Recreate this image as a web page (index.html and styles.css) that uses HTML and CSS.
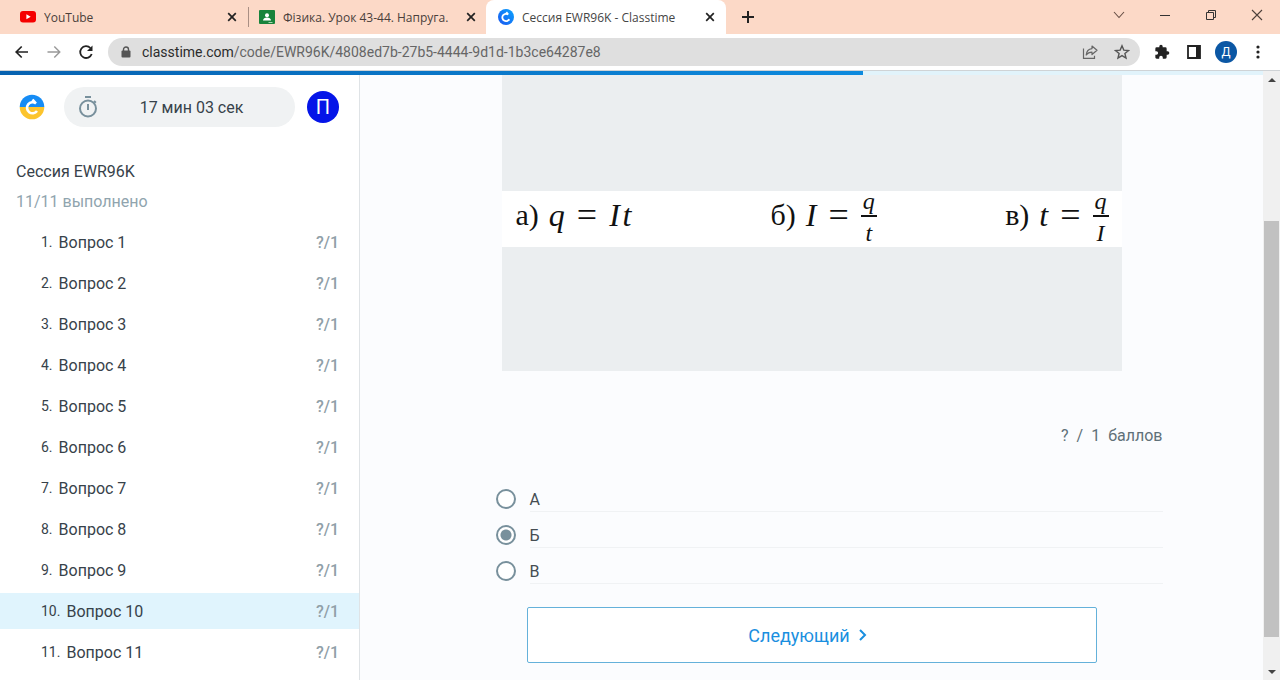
FILE: index.html
```html
<!DOCTYPE html>
<html lang="ru">
<head>
<meta charset="utf-8">
<title>Сессия EWR96K - Classtime</title>
<link rel="stylesheet" href="styles.css">
</head>
<body>
<header class="browser">
  <div class="tabstrip">
    <div class="tab tab-first">
      <svg class="favicon" viewBox="0 0 16 16"><rect y="2" width="16" height="11.5" rx="3" fill="#f50000"/><path d="M6.4 5.2v5l4.3-2.5z" fill="#fff"/></svg>
      <span class="tab-title">YouTube</span>
      <button class="icon-btn tab-close" aria-label="Закрыть вкладку"><svg viewBox="0 0 10 10"><path d="M1.2 1.2l7.6 7.6M8.8 1.2L1.2 8.8" stroke="#222" stroke-width="1.7"/></svg></button>
    </div>
    <div class="tab tab-second">
      <svg class="favicon" viewBox="0 0 16 16"><rect y="1" width="16" height="14" rx="1" fill="#18833b"/><circle cx="8" cy="6.2" r="2" fill="#fff"/><path d="M4 11.5c0-4 8-4 8 0z" fill="#fff"/><path d="M9.500 13h4v1h-4z" fill="#a5d6b2"/></svg>
      <span class="tab-title">Фізика. Урок 43-44. Напруга.</span>
      <button class="icon-btn tab-close" aria-label="Закрыть вкладку"><svg viewBox="0 0 10 10"><path d="M1.2 1.2l7.6 7.600M8.800 1.200L1.200 8.800" stroke="#222" stroke-width="1.7"/></svg></button>
    </div>
    <div class="tab tab-active">
      <svg class="favicon" viewBox="0 0 16 16"><defs><linearGradient id="blue" x1="0" y1="1" x2="1" y2="0"><stop offset="0" stop-color="#1b55ee"/><stop offset="1" stop-color="#0aa5ff"/></linearGradient></defs><circle cx="8" cy="8" r="8" fill="url(#blue)"/><path d="M11.300 10.200A3.700 3.700 0 1 1 10.300 5.500M8.300 3.200l2 2.300" fill="none" stroke="#fff" stroke-width="1.800"/></svg>
      <span class="tab-title">Сессия EWR96K - Classtime</span>
      <button class="icon-btn tab-close" aria-label="Закрыть вкладку"><svg viewBox="0 0 10 10"><path d="M1.200 1.200l7.600 7.600M8.800 1.200L1.200 8.800" stroke="#222" stroke-width="1.700"/></svg></button>
    </div>
    <button class="icon-btn new-tab" aria-label="Новая вкладка"><svg viewBox="0 0 12 12"><path d="M6 0v12M0 6h12" stroke="#222" stroke-width="2"/></svg></button>
    <div class="window-controls">
      <button class="icon-btn win" aria-label="Поиск вкладок"><svg viewBox="0 0 12 12"><path d="M1 3l5 5.500L11 3" fill="none" stroke="#664f45" stroke-width="1.100"/></svg></button>
      <button class="icon-btn win" aria-label="Свернуть"><svg viewBox="0 0 12 12"><path d="M1 6.500h10" stroke="#333" stroke-width="1"/></svg></button>
      <button class="icon-btn win" aria-label="Развернуть"><svg viewBox="0 0 12 12"><path d="M1.500 3.500h7v7h-7zM3.500 3.500v-2h7v7h-2" fill="none" stroke="#333"/></svg></button>
      <button class="icon-btn win" aria-label="Закрыть"><svg viewBox="0 0 12 12"><path d="M1 1l10 10M11 1L1 11" stroke="#4d403b" stroke-width="1.100"/></svg></button>
    </div>
  </div>
  <div class="toolbar">
    <button class="icon-btn nav" aria-label="Назад"><svg viewBox="0 0 16 16"><path d="M14 8H2.500M7.700 2.500L2.200 8l5.500 5.500" fill="none" stroke="#222" stroke-width="1.700"/></svg></button>
    <button class="icon-btn nav" aria-label="Вперёд"><svg viewBox="0 0 16 16"><path d="M1.500 8h12M8.300 2.500l5.500 5.500-5.500 5.500" fill="none" stroke="#999" stroke-width="1.400"/></svg></button>
    <button class="icon-btn nav" aria-label="Обновить"><svg viewBox="0 0 16 16"><path d="M13.700 10A5.900 5.900 0 1 1 12.400 4" fill="none" stroke="#222" stroke-width="1.800"/><path d="M14.500 1.500v5.500H9z" fill="#222"/></svg></button>
    <div class="omnibox">
      <svg class="lock" viewBox="0 0 10 12"><path d="M2.500 5V3.500a2.500 2.500 0 0 1 5 0V5" fill="none" stroke="#555" stroke-width="1.400"/><rect x=".5" y="4.500" width="9" height="7" rx="1" fill="#555"/></svg>
      <span class="url"><span class="host">classtime.com</span>/code/EWR96K/4808ed7b-27b5-4444-9d1d-1b3ce64287e8</span>
      <button class="icon-btn nav" aria-label="Поделиться"><svg viewBox="0 0 16 16"><path d="M1.500 4.500v9.800h11v-2.500" fill="none" stroke="#666" stroke-width="1.200"/><path d="M10 2l5 4.300-5 4.200V8.200C7 8.200 5.500 9.200 4.200 11c.3-3.500 2.500-6 5.800-6.400z" fill="none" stroke="#666" stroke-width="1.200" stroke-linejoin="round"/></svg></button>
      <button class="icon-btn nav" aria-label="В закладки"><svg viewBox="0 0 16 16"><path d="M8 1.800l1.800 4.300 4.700.4-3.600 3 1.100 4.600L8 11.600l-4 2.500 1.100-4.600-3.600-3 4.700-.4z" fill="none" stroke="#555" stroke-width="1.400"/></svg></button>
    </div>
    <button class="icon-btn nav" aria-label="Расширения"><svg viewBox="0 0 24 24"><path fill="#222" d="M20.500 11H19V7a2 2 0 0 0-2-2h-4V3.500a2.500 2.500 0 0 0-5 0V5H4a2 2 0 0 0-2 2v3.800h1.500a2.700 2.700 0 0 1 0 5.400H2V20c0 1.100.9 2 2 2h3.800v-1.500a2.700 2.700 0 0 1 5.400 0V22H17a2 2 0 0 0 2-2v-4h1.500a2.500 2.500 0 0 0 0-5z"/></svg></button>
    <button class="icon-btn nav" aria-label="Боковая панель"><svg viewBox="0 0 16 16"><path d="M2 2h12v12H2z" fill="none" stroke="#222" stroke-width="1.800"/><path d="M10 2h4v12h-4z" fill="#222"/></svg></button>
    <button class="profile">Д</button>
    <button class="icon-btn nav" aria-label="Меню"><svg viewBox="0 0 16 16"><g fill="#222"><circle cx="8" cy="3" r="1.600"/><circle cx="8" cy="8" r="1.600"/><circle cx="8" cy="13" r="1.600"/></g></svg></button>
  </div>
</header>
<div class="viewport">
  <div class="app">
    <div class="progress"><div class="progress-done" style="width:68.300%"></div></div>
    <div class="columns">
      <aside class="sidebar">
        <div class="topline">
          <svg class="logo" viewBox="0 0 26 26"><defs><clipPath id="disc"><circle cx="13" cy="13" r="12.300"/></clipPath></defs><g clip-path="url(#disc)"><path d="M0 0h26v13H0z" fill="#168cf5"/><path d="M0 13h26v13H0z" fill="#fcc42d"/></g><path d="M18 17A5.500 5.500 0 1 1 17 9.500M13.500 5.500L17 9.500" fill="none" stroke="#fff" stroke-width="2.600"/></svg>
          <div class="timer">
            <svg class="stopwatch" viewBox="0 0 20 22"><circle cx="10" cy="12.500" r="8" fill="none" stroke="#78909c" stroke-width="2"/><path d="M7 1h6M10 8v6M16 5l1.800 1.800" stroke="#78909c" stroke-width="2"/></svg>
            <span class="time">17 мин 03 сек</span>
          </div>
          <button class="avatar">П</button>
        </div>
        <h1 class="session">Сессия EWR96K</h1>
        <p class="done">11/11 выполнено</p>
        <nav class="questions">
          <a class="question" href="#q1"><span class="num">1.</span><span class="name">Вопрос 1</span><span class="mark">?/1</span></a>
          <a class="question" href="#q2"><span class="num">2.</span><span class="name">Вопрос 2</span><span class="mark">?/1</span></a>
          <a class="question" href="#q3"><span class="num">3.</span><span class="name">Вопрос 3</span><span class="mark">?/1</span></a>
          <a class="question" href="#q4"><span class="num">4.</span><span class="name">Вопрос 4</span><span class="mark">?/1</span></a>
          <a class="question" href="#q5"><span class="num">5.</span><span class="name">Вопрос 5</span><span class="mark">?/1</span></a>
          <a class="question" href="#q6"><span class="num">6.</span><span class="name">Вопрос 6</span><span class="mark">?/1</span></a>
          <a class="question" href="#q7"><span class="num">7.</span><span class="name">Вопрос 7</span><span class="mark">?/1</span></a>
          <a class="question" href="#q8"><span class="num">8.</span><span class="name">Вопрос 8</span><span class="mark">?/1</span></a>
          <a class="question" href="#q9"><span class="num">9.</span><span class="name">Вопрос 9</span><span class="mark">?/1</span></a>
          <a class="question current" href="#q10"><span class="num">10.</span><span class="name">Вопрос 10</span><span class="mark">?/1</span></a>
          <a class="question" href="#q11"><span class="num">11.</span><span class="name">Вопрос 11</span><span class="mark">?/1</span></a>
        </nav>
      </aside>
      <main class="content">
        <div class="sheet">
          <figure class="figure">
            <div class="formulas">
              <div class="formula"><span>а)</span><i>q</i><span class="eq">=</span><i>I&#8202;t</i></div>
              <div class="formula"><span>б)</span><i>I</i><span class="eq">=</span><i class="fraction"><span class="top">q</span><span class="bottom">t</span></i></div>
              <div class="formula"><span>в)</span><i>t</i><span class="eq">=</span><i class="fraction"><span class="top">q</span><span class="bottom">I</span></i></div>
            </div>
          </figure>
          <p class="score"><span>?</span><span>/</span><span>1</span><span>баллов</span></p>
          <div class="options" role="radiogroup" aria-label="Ответ">
            <label class="option"><input class="radio" type="radio" name="answer"><span class="letter">А</span></label>
            <label class="option"><input class="radio" type="radio" name="answer" checked><span class="letter">Б</span></label>
            <label class="option"><input class="radio" type="radio" name="answer"><span class="letter">В</span></label>
          </div>
          <button class="next">Следующий<svg class="chevron" viewBox="0 0 8 12"><path d="M1 1l5 5-5 5" fill="none" stroke="#1a8fe0" stroke-width="2"/></svg></button>
        </div>
      </main>
    </div>
  </div>
  <div class="scrollbar">
    <svg class="arrow" viewBox="0 0 8 4"><path d="M0 4l4-4 4 4z" fill="#444"/></svg>
    <div class="track"><div class="thumb"></div></div>
    <svg class="arrow" viewBox="0 0 8 4"><path d="M0 0l4 4 4-4z" fill="#444"/></svg>
  </div>
</div>
</body>
</html>
```

FILE: styles.css
```css
* { box-sizing: border-box; }
body { margin: 0; height: 100vh; display: flex; flex-direction: column; overflow: hidden; font-family: Roboto, "Liberation Sans", sans-serif; font-size: 16px; color: #37424a; background: #fff; }
button { border: 0; padding: 0; background: none; font: inherit; color: inherit; }
h1, p, figure { margin: 0; }
svg { display: block; flex: none; }

.browser { flex: none; border-bottom: 1px solid #cfd3d6; }
.tabstrip { display: flex; height: 34px; background: #fcd9c7; font-family: "Open Sans", "Noto Sans", sans-serif; font-size: 12px; color: #4a3f3b; }
.tab { display: flex; align-items: center; gap: 8px; }
.tab-first { width: 248px; padding: 0 10px 0 20px; }
.tab-second { width: 238px; padding: 0 9px 0 11px; background: linear-gradient(#a98f84, #a98f84) left center / 1px 20px no-repeat; }
.tab-active { width: 240px; padding: 0 10px 0 12px; background: #fff; border-radius: 8px 8px 0 0; color: #454545; }
.tab-title { flex: 1; white-space: nowrap; overflow: hidden; }
.favicon { width: 16px; height: 16px; }
.icon-btn { display: flex; align-items: center; justify-content: center; flex: none; }
.tab-close { width: 12px; height: 16px; }
.tab-close svg { width: 10px; height: 10px; }
.new-tab { width: 44px; }
.new-tab svg { width: 12px; height: 12px; }
.window-controls { display: flex; margin-left: auto; height: 29px; }
.win { width: 46px; }
.win svg { width: 12px; height: 12px; }

.toolbar { display: flex; align-items: center; height: 36px; padding: 0 14px; }
.toolbar > .nav { margin-right: 16px; }
.toolbar > .nav:last-child { margin-right: 0; }
.nav svg { width: 16px; height: 16px; }
.omnibox { flex: 1; display: flex; align-items: center; gap: 16px; height: 28px; margin: 0 14px 0 -2px; padding: 0 10px 0 13px; background: #dfdfdf; border-radius: 14px; font-size: 14px; color: #666; min-width: 0; }
.omnibox .lock { width: 10px; height: 12px; }
.lock + .url { margin-left: -5px; }
.url { flex: 1; white-space: nowrap; overflow: hidden; }
.host { color: #2c2c2c; }
.profile { flex: none; width: 22px; height: 22px; margin: 0 13px 0 -3px; border-radius: 50%; background: #0b57a4; color: #fff; font-size: 12px; line-height: 22px; }

.viewport { flex: 1; min-height: 0; display: flex; }
.app { flex: 1; min-width: 0; display: flex; flex-direction: column; }
.progress { flex: none; height: 4px; background: #e1f3fb; }
.progress-done { height: 4px; background: linear-gradient(90deg, #0762b0, #0d8ade); }
.columns { flex: 1; min-height: 0; display: flex; }

.sidebar { flex: none; width: 360px; overflow: hidden; border-right: 1px solid #dfe3e6; padding-top: 12px; }
.topline { display: flex; align-items: center; gap: 12px; padding: 0 20px 0 19px; }
.logo { width: 26px; height: 26px; }
.timer { flex: 1; display: flex; align-items: center; height: 40px; margin-left: 7px; padding: 0 10px 0 14px; border-radius: 20px; background: #f0f2f3; }
.stopwatch { width: 20px; height: 22px; }
.time { flex: 1; text-align: center; }
.avatar { width: 32px; height: 32px; border-radius: 50%; background: #0515e8; color: #fff; font-size: 20px; line-height: 32px; }
.session { margin-top: 35px; padding-left: 16px; font-size: 16px; font-weight: 400; line-height: 20px; }
.done { margin-top: 10px; padding-left: 16px; line-height: 20px; color: #90a4ae; }
.questions { display: flex; flex-direction: column; gap: 5px; margin-top: 12px; }
.question { display: flex; align-items: center; gap: 6px; height: 36px; padding: 0 20px 0 41px; color: #37424a; text-decoration: none; }
.num { font-size: 14px; }
.name { flex: 1; }
.mark { color: #90a0a8; font-weight: 500; }
.current { background: #e0f4fd; }

.content { flex: 1; min-width: 0; overflow: hidden; background: #fbfcfe; }
.sheet { display: flex; flex-direction: column; align-items: center; max-width: 702px; margin: 0 auto; }
.figure { width: 100%; max-width: 620px; padding: 116px 0 124px; background: #ebeef0; }
.formulas { display: grid; grid-template-columns: 255px 1fr auto; grid-template-rows: 48px; align-items: center; height: 56px; padding: 0 13px 8px 14px; background: #fff; color: #111; font-family: "Liberation Serif", serif; font-size: 32px; line-height: 32px; }
.formula { display: flex; align-items: center; gap: 10px; }
.eq { font-size: 36px; margin: 0 2px; }
.formula > span:first-child { font-size: 30px; }
.fraction { display: flex; flex-direction: column; text-align: center; font-size: 24px; line-height: 24px; margin-top: 6px; }
.top { padding: 0 2px 4px; border-bottom: 2px solid #111; line-height: 20px; }
.bottom { padding-top: 4px; }
.score { align-self: flex-end; display: flex; gap: 8px; margin-top: 55px; line-height: 20px; color: #607078; }
.options { align-self: stretch; margin-top: 30px; padding-left: 35px; }
.option { display: flex; align-items: stretch; gap: 14px; height: 36px; }
.radio { appearance: none; flex: none; width: 20px; height: 20px; margin: 13px 0 0; border: 2px solid #78909c; border-radius: 50%; background: #fff; }
.radio:checked { background: radial-gradient(circle, #78909c 5px, #fff 6px); }
.letter { flex: 1; padding-top: 12px; border-bottom: 1px solid #f0f2f4; line-height: 24px; color: #454d52; }
.next { display: flex; align-items: center; justify-content: center; gap: 9px; width: 100%; max-width: 570px; height: 56px; margin-top: 23px; padding-right: 8px; border: 1px solid #64b1da; border-radius: 2px; background: #fff; font-size: 18px; color: #1a8fe0; }
.chevron { width: 8px; height: 12px; }

.scrollbar { flex: none; display: flex; flex-direction: column; align-items: center; width: 17px; padding: 7px 0 6px; background: #f0f0f0; }
.arrow { width: 8px; height: 4px; }
.track { flex: 1; align-self: stretch; display: flex; flex-direction: column; justify-content: flex-end; padding: 0 1px 33px; }
.thumb { height: 75%; background: #c1c1c1; }
```
